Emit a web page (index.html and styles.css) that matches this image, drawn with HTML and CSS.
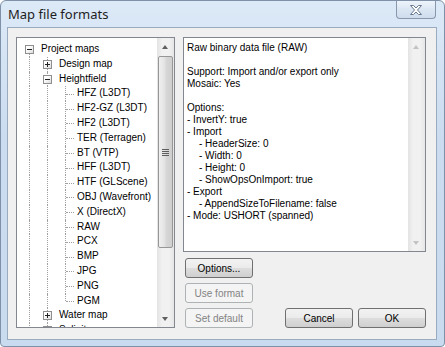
FILE: index.html
```html
<!DOCTYPE html>
<html lang="en">
<head>
    <meta charset="UTF-8">
    <title>Map file formats</title>
    <link rel="stylesheet" href="styles.css">
</head>
<body>
    <div class="window">
        <div class="titlebar">
            <span class="title">Map file formats</span>
            <div class="close-btn">
                <svg width="14" height="12" viewBox="0 0 14 12">
                    <path d="M1.5 1.5 L4.5 1.5 L7 4 L9.5 1.5 L12.5 1.5 L8.5 6 L12.5 10.5 L9.5 10.5 L7 8 L4.5 10.5 L1.5 10.5 L5.5 6 Z" fill="#fff" stroke="#6a7a90" stroke-width="1" stroke-linejoin="round"/>
                </svg>
            </div>
        </div>
        <div class="client">
            <!-- left: tree of map types -->
            <div class="tree">
                <div class="tree-items">
                    <div class="row"><span class="g node minus first"></span><span class="label">Project maps</span></div>
                    <div class="row"><span class="g line"></span><span class="g node plus"></span><span class="label">Design map</span></div>
                    <div class="row"><span class="g line"></span><span class="g node minus"></span><span class="label">Heightfield</span></div>
                    <div class="row"><span class="g line"></span><span class="g line"></span><span class="g tee"></span><span class="label">HFZ (L3DT)</span></div>
                    <div class="row"><span class="g line"></span><span class="g line"></span><span class="g tee"></span><span class="label">HF2-GZ (L3DT)</span></div>
                    <div class="row"><span class="g line"></span><span class="g line"></span><span class="g tee"></span><span class="label">HF2 (L3DT)</span></div>
                    <div class="row"><span class="g line"></span><span class="g line"></span><span class="g tee"></span><span class="label">TER (Terragen)</span></div>
                    <div class="row"><span class="g line"></span><span class="g line"></span><span class="g tee"></span><span class="label">BT (VTP)</span></div>
                    <div class="row"><span class="g line"></span><span class="g line"></span><span class="g tee"></span><span class="label">HFF (L3DT)</span></div>
                    <div class="row"><span class="g line"></span><span class="g line"></span><span class="g tee"></span><span class="label">HTF (GLScene)</span></div>
                    <div class="row"><span class="g line"></span><span class="g line"></span><span class="g tee"></span><span class="label">OBJ (Wavefront)</span></div>
                    <div class="row"><span class="g line"></span><span class="g line"></span><span class="g tee"></span><span class="label">X (DirectX)</span></div>
                    <div class="row"><span class="g line"></span><span class="g line"></span><span class="g tee"></span><span class="label">RAW</span></div>
                    <div class="row"><span class="g line"></span><span class="g line"></span><span class="g tee"></span><span class="label">PCX</span></div>
                    <div class="row"><span class="g line"></span><span class="g line"></span><span class="g tee"></span><span class="label">BMP</span></div>
                    <div class="row"><span class="g line"></span><span class="g line"></span><span class="g tee"></span><span class="label">JPG</span></div>
                    <div class="row"><span class="g line"></span><span class="g line"></span><span class="g tee"></span><span class="label">PNG</span></div>
                    <div class="row"><span class="g line"></span><span class="g line"></span><span class="g corner"></span><span class="label">PGM</span></div>
                    <div class="row"><span class="g line"></span><span class="g node plus"></span><span class="label">Water map</span></div>
                    <div class="row"><span class="g line"></span><span class="g node plus"></span><span class="label">Salinity map</span></div>
                </div>
                <div class="scrollbar">
                    <div class="arrow up"></div>
                    <div class="track">
                        <div class="thumb"><span class="grip"></span></div>
                    </div>
                    <div class="arrow down"></div>
                </div>
            </div>

            <!-- right: description and buttons -->
            <div class="side">
                <div class="info">
                    <div class="info-text">
                        <div>Raw binary data file (RAW)</div>
                        <div class="gap"></div>
                        <div>Support: Import and/or export only</div>
                        <div>Mosaic: Yes</div>
                        <div class="gap"></div>
                        <div>Options:</div>
                        <div>- InvertY: true</div>
                        <div>- Import</div>
                        <div class="sub">- HeaderSize: 0</div>
                        <div class="sub">- Width: 0</div>
                        <div class="sub">- Height: 0</div>
                        <div class="sub">- ShowOpsOnImport: true</div>
                        <div>- Export</div>
                        <div class="sub">- AppendSizeToFilename: false</div>
                        <div>- Mode: USHORT (spanned)</div>
                    </div>
                    <div class="scrollbar disabled">
                        <div class="arrow up"></div>
                        <div class="track"></div>
                        <div class="arrow down"></div>
                    </div>
                </div>
                <div class="actions">
                    <div class="left-buttons">
                        <button class="btn">Options...</button>
                        <button class="btn" disabled>Use format</button>
                        <button class="btn" disabled>Set default</button>
                    </div>
                    <div class="dialog-buttons">
                        <button class="btn">Cancel</button>
                        <button class="btn">OK</button>
                    </div>
                </div>
            </div>
        </div>
    </div>
</body>
</html>
```

FILE: styles.css
```css
body {
    margin: 0;
    padding: 0;
    width: 445px;
    height: 347px;
    overflow: hidden;
    background-color: #fff;
    font-family: "Liberation Sans", Arial, sans-serif;
}

.window {
    width: 445px;
    height: 347px;
    box-sizing: border-box;
    border: 1px solid #7f91a8;
    border-radius: 6px 6px 4px 4px;
    background: linear-gradient(to bottom, #dce9f7 0%, #cbdcf0 40%, #c9dbef 100%);
    display: flex;
    flex-direction: column;
}

.titlebar {
    height: 26px;
    display: flex;
    justify-content: space-between;
    align-items: flex-start;
}

.title {
    font-family: "Noto Sans", "Open Sans", sans-serif;
    font-size: 13px;
    color: #1e1e1e;
    padding: 4px 0 0 7px;
}

.close-btn {
    width: 40px;
    height: 18px;
    margin-right: 8px;
    box-sizing: border-box;
    border: 1px solid #8897ad;
    border-top: none;
    border-radius: 0 0 4px 4px;
    background: linear-gradient(to bottom, #eef4fb 0%, #dbe6f3 50%, #cfdcec 100%);
    display: flex;
    align-items: center;
    justify-content: center;
}

.client {
    margin: 0 7px 0 6px;
    height: 313px;
    box-sizing: border-box;
    border: 1px solid #9aabbf;
    background-color: #f0f0f0;
    display: flex;
    padding: 9px 10px 11px 8px;
    gap: 8px;
}

/* tree */

.tree {
    width: 159px;
    box-sizing: border-box;
    border: 1px solid #828790;
    background-color: #fff;
    display: flex;
    overflow: hidden;
}

.tree-items {
    flex: 1;
    padding: 4px 0 0 4px;
    overflow: hidden;
    font-size: 10px;
    color: #000;
}

.row {
    height: 14.8px;
    display: flex;
    align-items: stretch;
}

.g {
    width: 18px;
    flex: none;
    position: relative;
}

.line::before,
.tee::before,
.corner::before,
.node::before {
    content: "";
    position: absolute;
    left: 8px;
    top: 0;
    bottom: 0;
    border-left: 1px dotted #a0a0a0;
}

.corner::before {
    bottom: 50%;
}

.node.first::before {
    top: 50%;
}

.tee::after,
.corner::after {
    content: "";
    position: absolute;
    left: 9px;
    width: 8px;
    top: 50%;
    border-top: 1px dotted #a0a0a0;
}

.node::after {
    content: "";
    position: absolute;
    left: 4px;
    top: 3px;
    width: 7px;
    height: 7px;
    border: 1px solid #8f8f8f;
    background: linear-gradient(to bottom right, #fff 30%, #dcdcdc 100%);
    z-index: 1;
}

.node.minus::after {
    background-image:
        linear-gradient(#222, #222),
        linear-gradient(to bottom right, #fff 30%, #dcdcdc 100%);
    background-size: 5px 1px, 100% 100%;
    background-position: center, center;
    background-repeat: no-repeat;
}

.node.plus::after {
    background-image:
        linear-gradient(#222, #222),
        linear-gradient(#222, #222),
        linear-gradient(to bottom right, #fff 30%, #dcdcdc 100%);
    background-size: 5px 1px, 1px 5px, 100% 100%;
    background-position: center, center, center;
    background-repeat: no-repeat;
}

.label {
    line-height: 14.8px;
    white-space: nowrap;
    padding-left: 2px;
}

/* scrollbars */

.scrollbar {
    width: 17px;
    flex: none;
    display: flex;
    flex-direction: column;
    background: linear-gradient(to right, #e3e3e3 0%, #f1f1f1 30%, #f1f1f1 70%, #e6e6e6 100%);
}

.arrow {
    height: 17px;
    position: relative;
}

.arrow::after {
    content: "";
    position: absolute;
    left: 5px;
    width: 0;
    height: 0;
    border-left: 3.5px solid transparent;
    border-right: 3.5px solid transparent;
}

.arrow.up::after {
    top: 7px;
    border-bottom: 4px solid #606060;
}

.arrow.down::after {
    top: 7px;
    border-top: 4px solid #606060;
}

.track {
    flex: 1;
    position: relative;
}

.thumb {
    position: absolute;
    left: 1px;
    right: 1px;
    top: 1px;
    height: 192px;
    box-sizing: border-box;
    border: 1px solid #979797;
    border-radius: 2px;
    background: linear-gradient(to right, #f0f0f0 0%, #e2e2e2 45%, #d6d6d6 55%, #cfcfcf 100%);
    display: flex;
    align-items: center;
    justify-content: center;
}

.grip {
    width: 7px;
    height: 7px;
    background: repeating-linear-gradient(to bottom, #5e5e5e 0, #5e5e5e 1px, transparent 1px, transparent 2px);
}

.scrollbar.disabled .arrow.up::after {
    border-bottom-color: #c2c2c2;
}

.scrollbar.disabled .arrow.down::after {
    border-top-color: #c2c2c2;
}

/* right side */

.side {
    flex: 1;
    display: flex;
    flex-direction: column;
}

.info {
    height: 215px;
    box-sizing: border-box;
    border: 1px solid #828790;
    background-color: #fff;
    display: flex;
}

.info-text {
    flex: 1;
    padding: 4px 0 0 3px;
    font-size: 10px;
    line-height: 12px;
    color: #000;
    white-space: nowrap;
}

.gap {
    height: 12px;
}

.sub {
    padding-left: 12px;
}

.actions {
    flex: 1;
    display: flex;
    justify-content: space-between;
    align-items: flex-end;
    padding: 0 0 0 2px;
}

.left-buttons {
    display: flex;
    flex-direction: column;
    gap: 5px;
}

.dialog-buttons {
    display: flex;
    gap: 5px;
}

.btn {
    width: 68px;
    height: 20px;
    padding: 0;
    box-sizing: border-box;
    border: 1px solid #707070;
    border-radius: 3px;
    background: linear-gradient(to bottom, #f2f2f2 0%, #ebebeb 48%, #dddddd 52%, #cfcfcf 100%);
    font-family: "Liberation Sans", Arial, sans-serif;
    font-size: 10px;
    color: #000;
}

.btn:disabled {
    border-color: #adb2b5;
    background: #f4f4f4;
    color: #838383;
}
```
